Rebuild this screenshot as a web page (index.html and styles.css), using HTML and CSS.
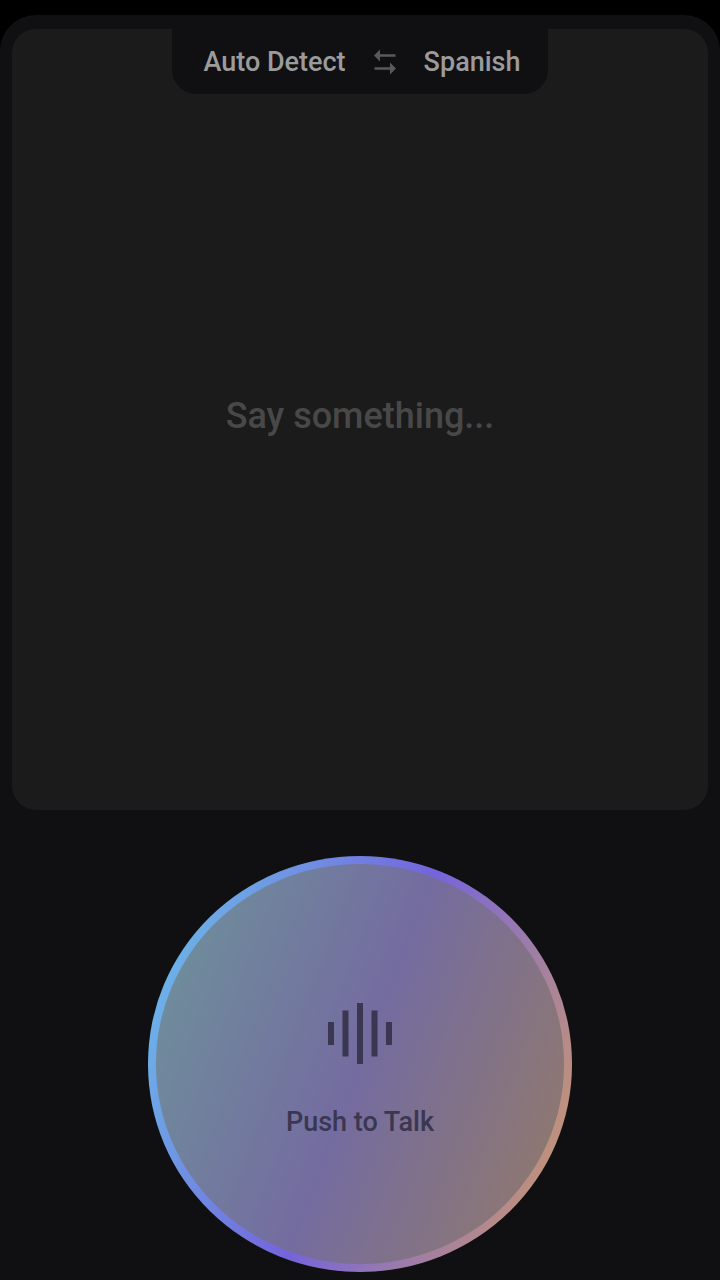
FILE: index.html
```html
<!DOCTYPE html>
<html lang="en">
<head>
    <meta charset="utf-8">
    <meta name="viewport" content="width=device-width, initial-scale=1">
    <title>Translator</title>
    <link rel="stylesheet" href="styles.css">
</head>
<body>
<main class="app">
    <section class="panel">
        <div class="languages">
            <button type="button" class="lang">Auto Detect</button>
            <button type="button" class="swap" aria-label="Swap languages">
                <svg width="22" height="26" viewBox="0 0 22 26" fill="currentColor" aria-hidden="true">
                    <path d="M0 6.5 6 .5v4.7h15.5v2.6H6v4.7z"/>
                    <path d="M22 19.5l-6-6v4.7H.5v2.6H16v4.7z"/>
                </svg>
            </button>
            <button type="button" class="lang">Spanish</button>
        </div>
        <p class="hint">Say something...</p>
    </section>
    <footer class="controls">
        <button type="button" class="talk">
            <svg width="64" height="61" viewBox="0 0 64 61" fill="currentColor" aria-hidden="true">
                <rect x="0" y="19" width="6" height="23"/>
                <rect x="14.5" y="7.5" width="6" height="46"/>
                <rect x="29" y="0" width="6" height="61"/>
                <rect x="43.5" y="7.5" width="6" height="46"/>
                <rect x="58" y="19" width="6" height="23"/>
            </svg>
            <span>Push to Talk</span>
        </button>
    </footer>
</main>
</body>
</html>
```
FILE: styles.css
```css
* {
    box-sizing: border-box;
    margin: 0;
    padding: 0;
}
body {
    display: flex;
    flex-direction: column;
    min-height: 100vh;
    padding-top: 15px;
    background: #000;
    font-family: Roboto, "Liberation Sans", sans-serif;
    font-weight: 500;
}
button {
    border: 0;
    background: none;
    font: inherit;
    color: inherit;
    cursor: pointer;
}
svg {
    display: block;
}
.app {
    flex: 1;
    display: flex;
    flex-direction: column;
    padding: 14px 12px 8px;
    border-radius: 36px 36px 0 0;
    background: #101012;
}
/* the language tab and the hint share one grid cell */
.panel {
    flex: 1;
    display: grid;
    border-radius: 24px;
    background: #1b1b1b;
}
.languages {
    grid-area: 1 / 1;
    place-self: start center;
    display: flex;
    align-items: center;
    justify-content: center;
    gap: 28px;
    width: 54%;
    height: 65px;
    padding-left: 4px;
    border-radius: 0 0 24px 24px;
    background: #101012;
    font-size: 27px;
    color: #9b9b9c;
}
.swap {
    color: #59595a;
}
.hint {
    grid-area: 1 / 1;
    place-self: center;
    padding-bottom: 8px;
    font-size: 36px;
    line-height: 48px;
    color: #484848;
}
.controls {
    display: flex;
    justify-content: center;
    padding-top: 46px;
}
.talk {
    display: flex;
    flex-direction: column;
    align-items: center;
    justify-content: center;
    gap: 40px;
    width: 61%;
    aspect-ratio: 424 / 415;
    padding-top: 14px;
    border: 8px solid transparent;
    border-radius: 50%;
    background:
        linear-gradient(111deg, #6e909b 5%, #746ca0 50%, #91796c 95%) padding-box,
        linear-gradient(111deg, #6cb2e8 10%, #7464dc 50%, #c2927a 90%) border-box;
    font-size: 27px;
    line-height: 36px;
    color: #3b3651;
}
```
